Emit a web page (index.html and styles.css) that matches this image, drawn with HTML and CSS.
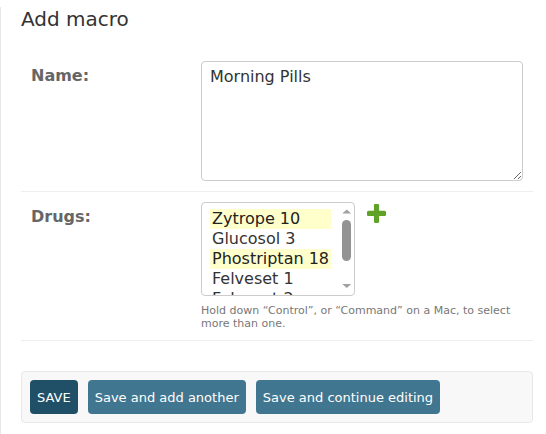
FILE: index.html
```html
<!DOCTYPE html>
<html lang="en">
<head>
<meta charset="utf-8">
<title>Add macro</title>
<link rel="stylesheet" href="styles.css">
</head>
<body>
<div class="page">
  <h1 class="title">Add macro</h1>
  <form class="form">
    <div class="row">
      <label class="label" for="id_name">Name:</label>
      <div class="field">
        <textarea class="textarea" id="id_name">Morning Pills</textarea>
      </div>
    </div>
    <div class="row">
      <label class="label">Drugs:</label>
      <div class="field">
        <div class="select-wrap">
          <div class="select">
            <div class="options">
              <div class="opt sel">Zytrope 10</div>
              <div class="opt">Glucosol 3</div>
              <div class="opt sel">Phostriptan 18</div>
              <div class="opt">Felveset 1</div>
              <div class="opt">Felveset 2</div>
            </div>
            <svg class="scrollbar" width="12" height="92" viewBox="0 0 12 92">
              <polygon points="1.3,10.5 10.2,10.5 5.75,6.6" fill="#a0a0a0"/>
              <rect x="1" y="17" width="9" height="41" rx="4.5" fill="#939393"/>
              <polygon points="1.3,81 10.2,81 5.75,84.9" fill="#a0a0a0"/>
            </svg>
          </div>
          <a class="addlink" href="#" title="Add another drug">
            <svg width="19" height="19" viewBox="192 192 1408 1408"><path fill="#5fa225" d="M1600 796v192q0 40-28 68t-68 28h-416v416q0 40-28 68t-68 28h-192q-40 0-68-28t-28-68v-416h-416q-40 0-68-28t-28-68v-192q0-40 28-68t68-28h416v-416q0-40 28-68t68-28h192q40 0 68 28t28 68v416h416q40 0 68 28t28 68z"/></svg>
          </a>
        </div>
        <p class="help">Hold down “Control”, or “Command” on a Mac, to select more than one.</p>
      </div>
    </div>
    <div class="submit-row">
      <button type="button" class="btn btn-default">Save</button>
      <button type="button" class="btn">Save and add another</button>
      <button type="button" class="btn">Save and continue editing</button>
    </div>
  </form>
</div>
</body>
</html>
```

FILE: styles.css
```css
html, body {
  margin: 0;
  padding: 0;
  background: #fff;
}

body {
  font-family: "DejaVu Sans", "Noto Sans", sans-serif;
  color: #333;
}

.page {
  box-sizing: border-box;
  min-height: 434px;
  border-left: 1px solid #e8e8e8;
  padding: 0 13px 0 20px;
}

.title {
  margin: 7px 0 0;
  font-size: 20px;
  line-height: 24px;
  font-weight: normal;
  color: #333;
}

.form {
  margin: 20px 0 0;
}

.row {
  display: flex;
  padding: 10px;
  border-bottom: 1px solid #eee;
}

.label {
  flex: 0 0 170px;
  padding-top: 4px;
  font-size: 16px;
  line-height: 21px;
  font-weight: bold;
  color: #666;
}

.field {
  flex: 1;
  min-width: 0;
}

.textarea {
  display: block;
  box-sizing: border-box;
  width: 322px;
  height: 120px;
  margin: 0;
  padding: 5px 8px;
  border: 1px solid #ccc;
  border-radius: 4px;
  font-family: "DejaVu Sans", sans-serif;
  font-size: 16px;
  line-height: 20px;
  color: #333;
  background: #fff;
}

.select-wrap {
  display: flex;
  align-items: flex-start;
  gap: 12px;
}

.select {
  display: flex;
  box-sizing: border-box;
  width: 154px;
  height: 94px;
  border: 1px solid #ccc;
  border-radius: 4px;
  overflow: hidden;
  background: #fff;
}

.options {
  flex: 1;
  padding: 6px 10px 0 8px;
  overflow: hidden;
}

.opt {
  width: 121px;
  box-sizing: border-box;
  padding-left: 2px;
  font-size: 16px;
  line-height: 20px;
  height: 20px;
  white-space: nowrap;
  color: #333;
}

.opt.sel {
  background: #ffffcc;
  color: #222;
}

.scrollbar {
  flex: 0 0 12px;
  display: block;
  margin-right: 1px;
}

.addlink {
  display: block;
  margin-top: 2px;
  line-height: 0;
}

.addlink svg {
  display: block;
}

.help {
  margin: 9px 0 0;
  font-size: 11px;
  line-height: 12.5px;
  color: #777;
}

.submit-row {
  display: flex;
  gap: 10px;
  margin-top: 30px;
  padding: 8px;
  border: 1px solid #e8e8e8;
  border-radius: 4px;
  background: #f8f8f8;
}

.btn {
  margin: 0;
  padding: 10px 7px 8px;
  border: none;
  border-radius: 4px;
  background: #417690;
  color: #fff;
  font-family: "DejaVu Sans", sans-serif;
  font-size: 13px;
  line-height: 16px;
  cursor: pointer;
}

.btn-default {
  background: #205067;
  text-transform: uppercase;
}
```
